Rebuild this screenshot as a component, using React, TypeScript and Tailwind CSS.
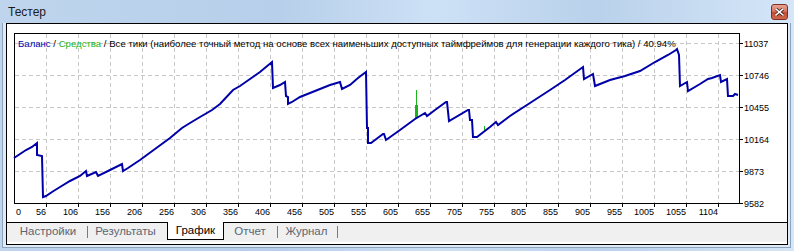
import React from "react";

const balance: [number, number][] = [
  [14, 158], [20, 154], [26, 150], [32, 147], [37, 143], [37, 155], [42, 156], [43, 197], [46, 196],
  [52, 192], [60, 187], [70, 181], [80, 176], [86, 171], [87, 176], [96, 172], [98, 176], [110, 170],
  [122, 164], [123, 171], [128, 168], [140, 160], [155, 149], [170, 138], [182, 128], [190, 123],
  [200, 117], [212, 110], [220, 104], [233, 90], [240, 86], [250, 79], [260, 72], [272, 62], [273, 88],
  [280, 85], [285, 82], [286, 96], [288, 97], [288, 104], [292, 102], [300, 97], [310, 93], [320, 89],
  [330, 85], [340, 82], [342, 89], [350, 85], [358, 78], [366, 72], [367, 128], [368, 128], [368, 143],
  [371, 143], [383, 134], [384, 134], [386, 140], [400, 130], [415, 119], [420, 116], [425, 113],
  [427, 116], [435, 110], [446, 102], [447, 102], [449, 121], [468, 110], [469, 110], [470, 120],
  [472, 120], [473, 137], [477, 137], [490, 127], [496, 122], [498, 125], [510, 116], [530, 103],
  [550, 90], [565, 80], [583, 67], [584, 79], [593, 74], [595, 86], [610, 80], [625, 76], [640, 71],
  [655, 62], [668, 55], [676, 50], [677, 49], [679, 55], [680, 86], [687, 82], [688, 91], [700, 84],
  [708, 79], [712, 78], [720, 75], [721, 82], [727, 79], [728, 96], [733, 96], [735, 94], [738, 95],
];

const xLabels = [
  "56", "106", "156", "206", "256", "306", "356", "406", "456", "505", "555",
  "605", "655", "705", "755", "805", "855", "905", "955", "1005", "1055", "1104",
];
const yLabels = ["11037", "10746", "10455", "10164", "9873", "9582"];

function Chart() {
  const pts = balance.map(([x, y]) => `${x},${y}`).join(" ");
  return (
    <svg width={777} height={198} viewBox="7 24 777 198" className="block">
      <rect x={7} y={24} width={777} height={198} fill="#ffffff" />
      {xLabels.map((_, i) => {
        const x = 46 + 32 * i + 0.5;
        return (
          <line key={"vg" + i} x1={x} y1={34} x2={x} y2={203} stroke="#c8c8c8" strokeDasharray="4 3" />
        );
      })}
      {yLabels.slice(0, 5).map((_, i) => {
        const y = 43 + 32 * i + 0.5;
        return (
          <line key={"hg" + i} x1={15} y1={y} x2={739} y2={y} stroke="#c8c8c8" strokeDasharray="4 3" />
        );
      })}
      <rect x={14.5} y={33.5} width={725} height={170} fill="none" stroke="#000" />
      {xLabels.map((_, i) => {
        const x = 46 + 32 * i + 0.5;
        return <line key={"xt" + i} x1={x} y1={204} x2={x} y2={207} stroke="#000" />;
      })}
      {yLabels.map((_, i) => {
        const y = 43 + 32 * i + 0.5;
        return <line key={"yt" + i} x1={740} y1={y} x2={743} y2={y} stroke="#000" />;
      })}
      <g fontFamily='"Liberation Sans", Arial, sans-serif' fontSize={9} fill="#000">
        <text x={16} y={215}>0</text>
        {xLabels.map((l, i) => (
          <text key={"xl" + i} x={46 + 32 * i} y={215} textAnchor="end">
            {l}
          </text>
        ))}
        {yLabels.map((l, i) => (
          <text key={"yl" + i} x={744} y={43 + 32 * i + 3.5}>
            {l}
          </text>
        ))}
      </g>
      <line x1={416.5} y1={90} x2={416.5} y2={119} stroke="#1cb41c" />
      <line x1={415.5} y1={105} x2={415.5} y2={118} stroke="#1cb41c" />
      <line x1={417.5} y1={105} x2={417.5} y2={117} stroke="#1cb41c" />
      <line x1={484.5} y1={126} x2={484.5} y2={131} stroke="#1cb41c" />
      <polyline points={pts} fill="none" stroke="#0000a8" strokeWidth={2} strokeLinejoin="miter" />
      <text x={18} y={46.5} fontFamily='"Liberation Sans", Arial, sans-serif' fontSize={9.6} fill="#000">
        <tspan fill="#0000a8">Баланс</tspan>
        <tspan> / </tspan>
        <tspan fill="#1cb41c">Средства</tspan>
        <tspan>
          {" / Все тики (наиболее точный метод на основе всех наименьших доступных таймфреймов для генерации каждого тика) / 40.94%"}
        </tspan>
      </text>
    </svg>
  );
}

function CloseButton() {
  return (
    <div className="w-[17px] h-[16px] rounded-[3px] border border-[#7d2f22] bg-[linear-gradient(180deg,#e8a596_0%,#d77560_45%,#c24a30_55%,#cf6a4e_100%)] flex items-center justify-center">
      <svg width="9" height="8" viewBox="0 0 9 8">
        <path d="M1 1 L8 7 M8 1 L1 7" stroke="#3b1a12" strokeWidth="3" strokeLinecap="square" />
        <path d="M1 1 L8 7 M8 1 L1 7" stroke="#ffffff" strokeWidth="1.6" strokeLinecap="square" />
      </svg>
    </div>
  );
}

function Tabs() {
  const tabText = "text-[11.5px] leading-none text-[#5b6674] font-['Liberation_Sans',Arial,sans-serif]";
  return (
    <div className="h-[20px] bg-[#f0f0f0] border-t border-black flex items-start">
      <div className="w-[7px]" />
      <div className={`w-[68px] h-[17px] flex items-center justify-center ${tabText}`}>Настройки</div>
      <div className="ml-[5px] mt-[3px] w-px h-[12px] bg-[#7a7a7a]" />
      <div className={`w-[75px] h-[17px] flex items-center justify-center ${tabText}`}>Результаты</div>
      <div className="w-[4px]" />
      <div className="-mt-px w-[57px] h-[18px] bg-white border-x border-b border-black flex items-center justify-center text-[11.5px] leading-none text-black font-['Liberation_Sans',Arial,sans-serif]">
        График
      </div>
      <div className={`w-[52px] h-[17px] flex items-center justify-center ${tabText}`}>Отчет</div>
      <div className="ml-px mt-[3px] w-px h-[12px] bg-[#7a7a7a]" />
      <div className={`w-[57px] h-[17px] flex items-center justify-center ${tabText}`}>Журнал</div>
      <div className="ml-[2px] mt-[3px] w-px h-[12px] bg-[#7a7a7a]" />
    </div>
  );
}

export default function App() {
  return (
    <div className="w-[794px] h-[251px] overflow-hidden flex flex-col bg-[linear-gradient(90deg,#bfd5ee_0%,#b7cfea_35%,#cde1f6_55%,#b9d1eb_75%,#d5e6f8_100%)]">
      <div className="h-[23px] flex items-center justify-between pl-[8px] pr-[6px]">
        <span className="text-[12px] text-[#1a1a1a] font-['Liberation_Sans',Arial,sans-serif] leading-none mt-[1px]">
          Тестер
        </span>
        <CloseButton />
      </div>
      <div className="flex-1 ml-[2px] mr-[3px] mb-[3px] border-x border-b border-[#8da2bb] bg-[#dfeaf6] pl-[3px] pr-[2px] pb-[2px] flex">
        <div className="flex-1 border border-black flex flex-col bg-white">
          <Chart />
          <Tabs />
        </div>
      </div>
    </div>
  );
}
